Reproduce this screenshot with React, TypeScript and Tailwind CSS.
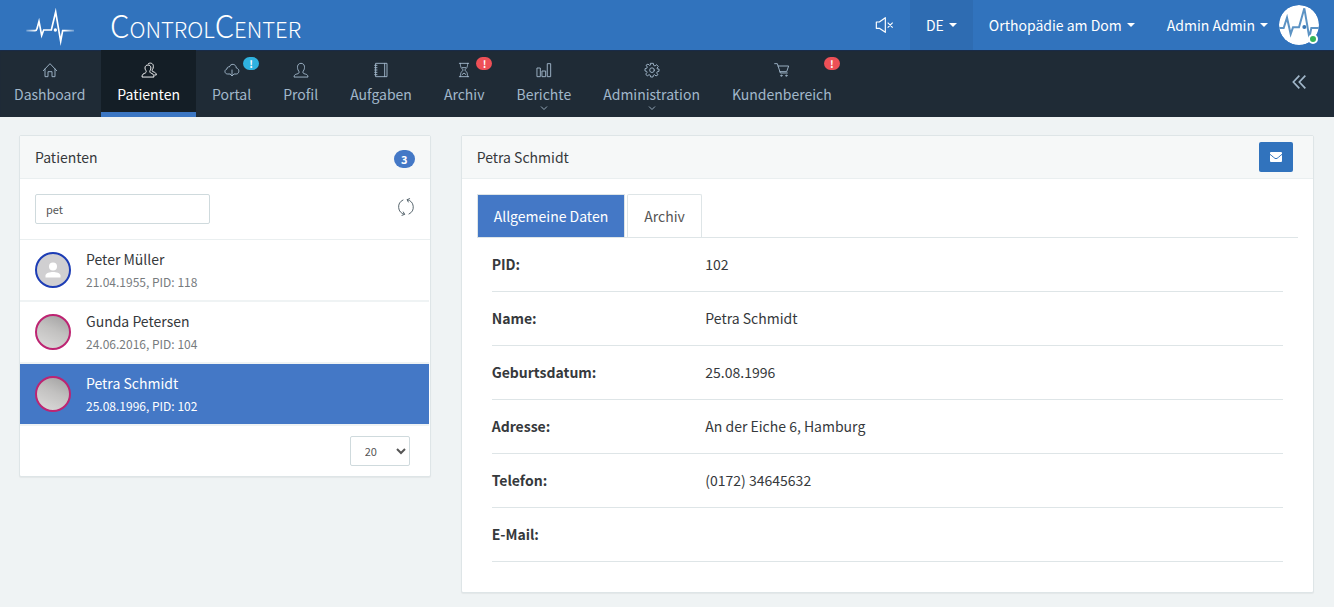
import { useState, type ReactNode } from "react";

const pulse =
  "M79 92 H105 Q110 92 111 86 L117 64 L125 106 L131 90 H154 L167 36 L182 124 L188 92 H222";

function Line({ children, className = "size-4" }: { children: ReactNode; className?: string }) {
  return (
    <svg
      viewBox="0 0 48 48"
      className={className}
      fill="none"
      stroke="currentColor"
      strokeWidth="2.8"
      strokeLinejoin="round"
      strokeLinecap="round"
      aria-hidden="true"
    >
      {children}
    </svg>
  );
}

const HomeIcon = (
  <Line>
    <path d="M4 26 L24 5 L44 26 M9 21 V44 H18 V29 H30 V44 H39 V21" />
  </Line>
);
const UsersIcon = (
  <Line>
    <path d="M3 44 C3 36 8 35 13 33 C16 31 16 28 15 26 C10 20 11 9 21 9 C31 9 31 20 27 26 C26 28 26 31 29 33 C34 35 39 36 39 44 Z" />
    <path d="M22 5 C26 1 38 3 37 14 C37 18 36 20 34 23 C33 26 33 28 36 29 C42 31 46 33 46 39 H41" />
  </Line>
);
const CloudIcon = (
  <Line>
    <path d="M18 36 H11 C1 36 0 23 9 21 C9 15 13 14 16 15 C20 3 36 5 37 18 C48 20 46 36 37 36 H31" />
    <path d="M24 24 V41 M19 37 L24 42 L29 37" />
  </Line>
);
const UserIcon = (
  <Line>
    <path d="M3 44 C3 37 9 37 15 35 C19 33 19 30 17 27 C11 19 12 4 24 4 C36 4 37 19 31 27 C29 30 29 33 33 35 C39 37 45 37 45 44 Z" />
  </Line>
);
const NotebookIcon = (
  <Line>
    <path d="M9 4 H42 V44 H9 Z M35 4 V44 M5 10 H12 M5 17 H12 M5 24 H12 M5 31 H12 M5 38 H12" />
  </Line>
);
const HourglassIcon = (
  <Line>
    <path d="M10 4 H38 M10 44 H38 M13 4 C13 16 16 19 22 24 C16 29 13 32 13 44 M35 4 C35 16 32 19 26 24 C32 29 35 32 35 44 M19 17 H29 M18 38 L24 33 L30 38" />
  </Line>
);
const GraphIcon = (
  <Line>
    <path d="M4 18 H13 V44 H4 Z M19 27 H29 V44 H19 Z M35 5 H44 V44 H35 Z" />
  </Line>
);
const GearIcon = (
  <Line>
    <path d="M20 4 H28 L29 10 L33 12 L38 8 L43 14 L39 18 L40 21 L45 21 V28 L40 29 L38 33 L42 38 L36 42 L32 38 L28 40 L27 45 H20 L19 40 L15 38 L10 42 L5 36 L9 32 L8 28 L3 27 V20 L8 19 L10 15 L6 10 L12 6 L16 10 L19 9 Z" />
    <circle cx="24" cy="24.5" r="7" />
  </Line>
);
const CartIcon = (
  <Line>
    <path d="M2 5 H10 L19 33 H40 M12 12 H44 L38 29 H18" />
    <circle cx="22" cy="41" r="2" />
    <circle cx="37" cy="41" r="2" />
  </Line>
);

type NavEntry = {
  label: string;
  icon: ReactNode;
  active?: boolean;
  badge?: "info" | "danger";
  menu?: boolean;
};

const navEntries: NavEntry[] = [
  { label: "Dashboard", icon: HomeIcon },
  { label: "Patienten", icon: UsersIcon, active: true },
  { label: "Portal", icon: CloudIcon, badge: "info" },
  { label: "Profil", icon: UserIcon },
  { label: "Aufgaben", icon: NotebookIcon },
  { label: "Archiv", icon: HourglassIcon, badge: "danger" },
  { label: "Berichte", icon: GraphIcon, menu: true },
  { label: "Administration", icon: GearIcon, menu: true },
  { label: "Kundenbereich", icon: CartIcon, badge: "danger" },
];

function Caret() {
  return <span className="border-x-4 border-t-4 border-x-transparent border-t-current" />;
}

function NavItem({ label, icon, active, badge, menu }: NavEntry) {
  return (
    <li className="flex">
      <a
        href="#"
        aria-current={active ? "page" : undefined}
        className={`relative flex flex-col items-center px-4 pt-3 ${
          active ? "border-b-5 border-[#3b76c3] bg-[#141e26] text-white" : "text-[#a1b7ca]"
        }`}
      >
        {icon}
        <span className="mt-1 leading-6">{label}</span>
        {menu && (
          <svg viewBox="0 0 8 4" className="h-1 w-2" fill="none" stroke="currentColor" aria-hidden="true">
            <path d="M1 0.5 L4 3.5 L7 0.5" strokeWidth="0.9" />
          </svg>
        )}
        {badge && (
          <span
            className={`absolute top-[7px] right-2 flex h-[13px] w-4 items-center justify-center rounded-full text-[10px] leading-none font-bold text-white ${
              badge === "info" ? "bg-[#2fb2df]" : "bg-[#ee5057]"
            }`}
          >
            !
          </span>
        )}
      </a>
    </li>
  );
}

function Header() {
  return (
    <header className="flex h-[50px] items-center bg-[#3173bd] text-white">
      <a href="#" className="flex items-center gap-9 pl-[26px]">
        <svg viewBox="78 15 144 120" className="h-10 w-12 overflow-visible" aria-hidden="true">
          <defs>
            <linearGradient id="fade" gradientUnits="userSpaceOnUse" x1="79" y1="0" x2="222" y2="0">
              <stop offset="0" stopColor="#fff" stopOpacity="0.3" />
              <stop offset="0.2" stopColor="#fff" />
              <stop offset="0.8" stopColor="#fff" />
              <stop offset="1" stopColor="#fff" stopOpacity="0.3" />
            </linearGradient>
          </defs>
          <path d={pulse} fill="none" stroke="url(#fade)" strokeWidth="5" strokeMiterlimit="10" />
          <circle cx="166" cy="90" r="5" fill="#fff" />
        </svg>
        <span className="text-[31px] leading-[50px] font-light [font-variant-caps:small-caps]">ControlCenter</span>
      </a>
      <div className="ml-auto flex h-full items-center pr-[15px]">
        <button type="button" aria-label="Ton aus" className="flex h-full items-center px-[15px]">
          <svg
            viewBox="0 0 60 48"
            className="h-4 w-5"
            fill="none"
            stroke="currentColor"
            strokeWidth="3.5"
            strokeLinejoin="round"
            aria-hidden="true"
          >
            <path d="M13 15 H4 V34 H13 L31 46 V2 Z M38 17 L53 32 M53 17 L38 32" />
          </svg>
        </button>
        <button type="button" className="flex h-full items-center gap-[5px] bg-[#2e6cb2] px-4">
          DE <Caret />
        </button>
        <button type="button" className="flex h-full items-center gap-[5px] px-4">
          Orthopädie am Dom <Caret />
        </button>
        <button type="button" className="flex h-full items-center gap-[5px] pl-4">
          Admin Admin <Caret />
          <span className="relative ml-1.5 block">
            <svg viewBox="0 0 120 120" className="size-10 rounded-full" aria-hidden="true">
              <circle cx="60" cy="60" r="60" fill="#fff" />
              <path
                d="M0 69 H14 L24 38 L35 87 L42 67 H60 L76 10 L91 98 L97 69 H120"
                fill="none"
                stroke="#5c93c4"
                strokeWidth="6"
              />
              <circle cx="76" cy="66" r="6" fill="#3a78b5" />
            </svg>
            <span className="absolute right-px bottom-px size-[10px] rounded-full border-2 border-white bg-[#35b558]" />
          </span>
        </button>
      </div>
    </header>
  );
}

type Patient = { name: string; born: string; pid: number; photo: boolean };

const patients: Patient[] = [
  { name: "Peter Müller", born: "21.04.1955", pid: 118, photo: false },
  { name: "Gunda Petersen", born: "24.06.2016", pid: 104, photo: true },
  { name: "Petra Schmidt", born: "25.08.1996", pid: 102, photo: true },
];

function Avatar({ photo }: { photo: boolean }) {
  if (photo) {
    return (
      <span className="size-9 shrink-0 rounded-full border-2 border-[#bd2472] bg-[linear-gradient(205deg,#a09f9f_0%,#c2c1c0_45%,#dddcdb_100%)]" />
    );
  }
  return (
    <span className="flex size-9 shrink-0 items-center justify-center rounded-full border-2 border-[#1d3db5] bg-[#d0cfd1]">
      <svg viewBox="0 0 16 16" className="size-4" fill="#fff" aria-hidden="true">
        <circle cx="8" cy="4.5" r="4" />
        <path d="M0.5 15.5 V13.5 C0.5 11 5 10 8 10 C11 10 15.5 11 15.5 13.5 V15.5 Z" />
      </svg>
    </span>
  );
}

const panel = "rounded-xs border border-[#dee5e7] bg-white shadow-[0_1px_1px_rgba(0,0,0,0.05)]";
const panelHeader = "flex h-[43px] items-center justify-between border-b border-[#eaeff0] bg-[#f6f8f8] pl-[15px]";

function PatientList() {
  const [query, setQuery] = useState("pet");
  return (
    <section className={panel}>
      <div className={`${panelHeader} pr-[15px]`}>
        <h2>Patienten</h2>
        <span className="mt-1 flex h-[18px] w-[21px] items-center justify-center rounded-full bg-[#4478c6] text-[11px] leading-none font-bold text-white">
          3
        </span>
      </div>
      <div className="flex justify-between border-b border-[#eaeff0] p-[15px]">
        <input
          type="text"
          aria-label="Patienten suchen"
          value={query}
          onChange={(e) => setQuery(e.target.value)}
          className="h-[30px] w-[175px] rounded-xs border border-[#cfdadd] px-[10px] text-[11px] text-[#555]"
        />
        <button type="button" aria-label="Aktualisieren" className="h-[26px] text-[#58666e]">
          <svg
            viewBox="0 0 54 54"
            className="size-[18px]"
            fill="none"
            stroke="currentColor"
            strokeWidth="3"
            strokeLinecap="round"
            strokeLinejoin="round"
            aria-hidden="true"
          >
            <path d="M18 6 A23 23 0 0 0 22 49 M19 42 L23 49 L15 52" />
            <path d="M36 48 A23 23 0 0 0 31 5 M34 12 L30 5 L38 2" />
          </svg>
        </button>
      </div>
      <ul className="mr-px">
        {patients.map((p) => {
          const selected = p.pid === 102;
          return (
            <li key={p.pid} className="border-b-2 border-[#eff3f4]">
              <button
                type="button"
                className={`flex h-[60px] w-full items-center gap-[15px] px-[15px] text-left ${
                  selected ? "bg-[#4478c6] text-white" : ""
                }`}
              >
                <Avatar photo={p.photo} />
                <span>
                  <span className="block leading-6">{p.name}</span>
                  <span className={`block text-xs leading-[22px] ${selected ? "" : "text-[#777b7e]"}`}>
                    {p.born}, PID: {p.pid}
                  </span>
                </span>
              </button>
            </li>
          );
        })}
      </ul>
      <div className="flex justify-end py-[10px] pr-5">
        <select
          aria-label="Einträge pro Seite"
          defaultValue="20"
          className="h-[30px] w-[60px] rounded-xs border border-[#cfdadd] bg-white pl-[10px] text-[11px] text-[#555]"
        >
          <option>10</option>
          <option>20</option>
          <option>50</option>
        </select>
      </div>
    </section>
  );
}

const details = [
  ["PID:", "102"],
  ["Name:", "Petra Schmidt"],
  ["Geburtsdatum:", "25.08.1996"],
  ["Adresse:", "An der Eiche 6, Hamburg"],
  ["Telefon:", "(0172) 34645632"],
  ["E-Mail:", ""],
];

function PatientDetails() {
  return (
    <section className={`${panel} col-span-2`}>
      <div className={`${panelHeader} pr-5`}>
        <h2>Petra Schmidt</h2>
        <button
          type="button"
          aria-label="Nachricht senden"
          className="flex h-[30px] w-[34px] items-center justify-center rounded-xs bg-[#3173bd]"
        >
          <svg viewBox="0 0 36 30" className="h-[10px] w-3" aria-hidden="true">
            <rect width="36" height="30" rx="3" fill="#fff" />
            <path d="M0 7 C8 13 14 20 18 20 C22 20 28 13 36 7" fill="none" stroke="#3173bd" strokeWidth="3" />
          </svg>
        </button>
      </div>
      <div className="px-[15px] pt-[15px] pb-[30px]">
        <div role="tablist" className="flex gap-0.5 border-b border-[#dee5e7]">
          <button
            type="button"
            role="tab"
            aria-selected="true"
            className="h-[43px] border border-b-0 border-[#dee5e7] bg-[#4478c6] px-4 text-white"
          >
            Allgemeine Daten
          </button>
          <button
            type="button"
            role="tab"
            aria-selected="false"
            className="h-[43px] rounded-t-xs border border-b-0 border-[#dee5e7] px-4 text-[#555]"
          >
            Archiv
          </button>
        </div>
        <dl className="px-[15px]">
          {details.map(([label, value]) => (
            <div key={label} className="grid h-[54px] grid-cols-[27%_1fr] items-center border-b border-[#dee5e7] pb-0.5">
              <dt className="font-bold">{label}</dt>
              <dd>{value}</dd>
            </div>
          ))}
        </dl>
      </div>
    </section>
  );
}

export default function App() {
  return (
    <div className="min-h-screen bg-[#eff3f4] font-['Noto_Sans_CJK_SC',sans-serif] text-sm text-[#36393c]">
      <Header />
      <nav className="flex h-[67px] items-stretch justify-between bg-[#1f2b36] shadow-[inset_0_1px_1px_rgba(20,45,90,0.6)]">
        <ul className="-ml-0.5 flex">
          {navEntries.map((entry) => (
            <NavItem key={entry.label} {...entry} />
          ))}
        </ul>
        <button type="button" aria-label="Menü einklappen" className="px-7 pb-1 text-[#a1b7ca]">
          <svg viewBox="0 0 42 42" className="size-[14px]" fill="none" stroke="currentColor" strokeWidth="5" aria-hidden="true">
            <path d="M22 2 L4 21 L22 40 M40 2 L22 21 L40 40" />
          </svg>
        </button>
      </nav>
      <main className="grid grid-cols-3 items-start gap-[30px] py-[18px] pr-5 pl-[19px]">
        <PatientList />
        <PatientDetails />
      </main>
    </div>
  );
}
